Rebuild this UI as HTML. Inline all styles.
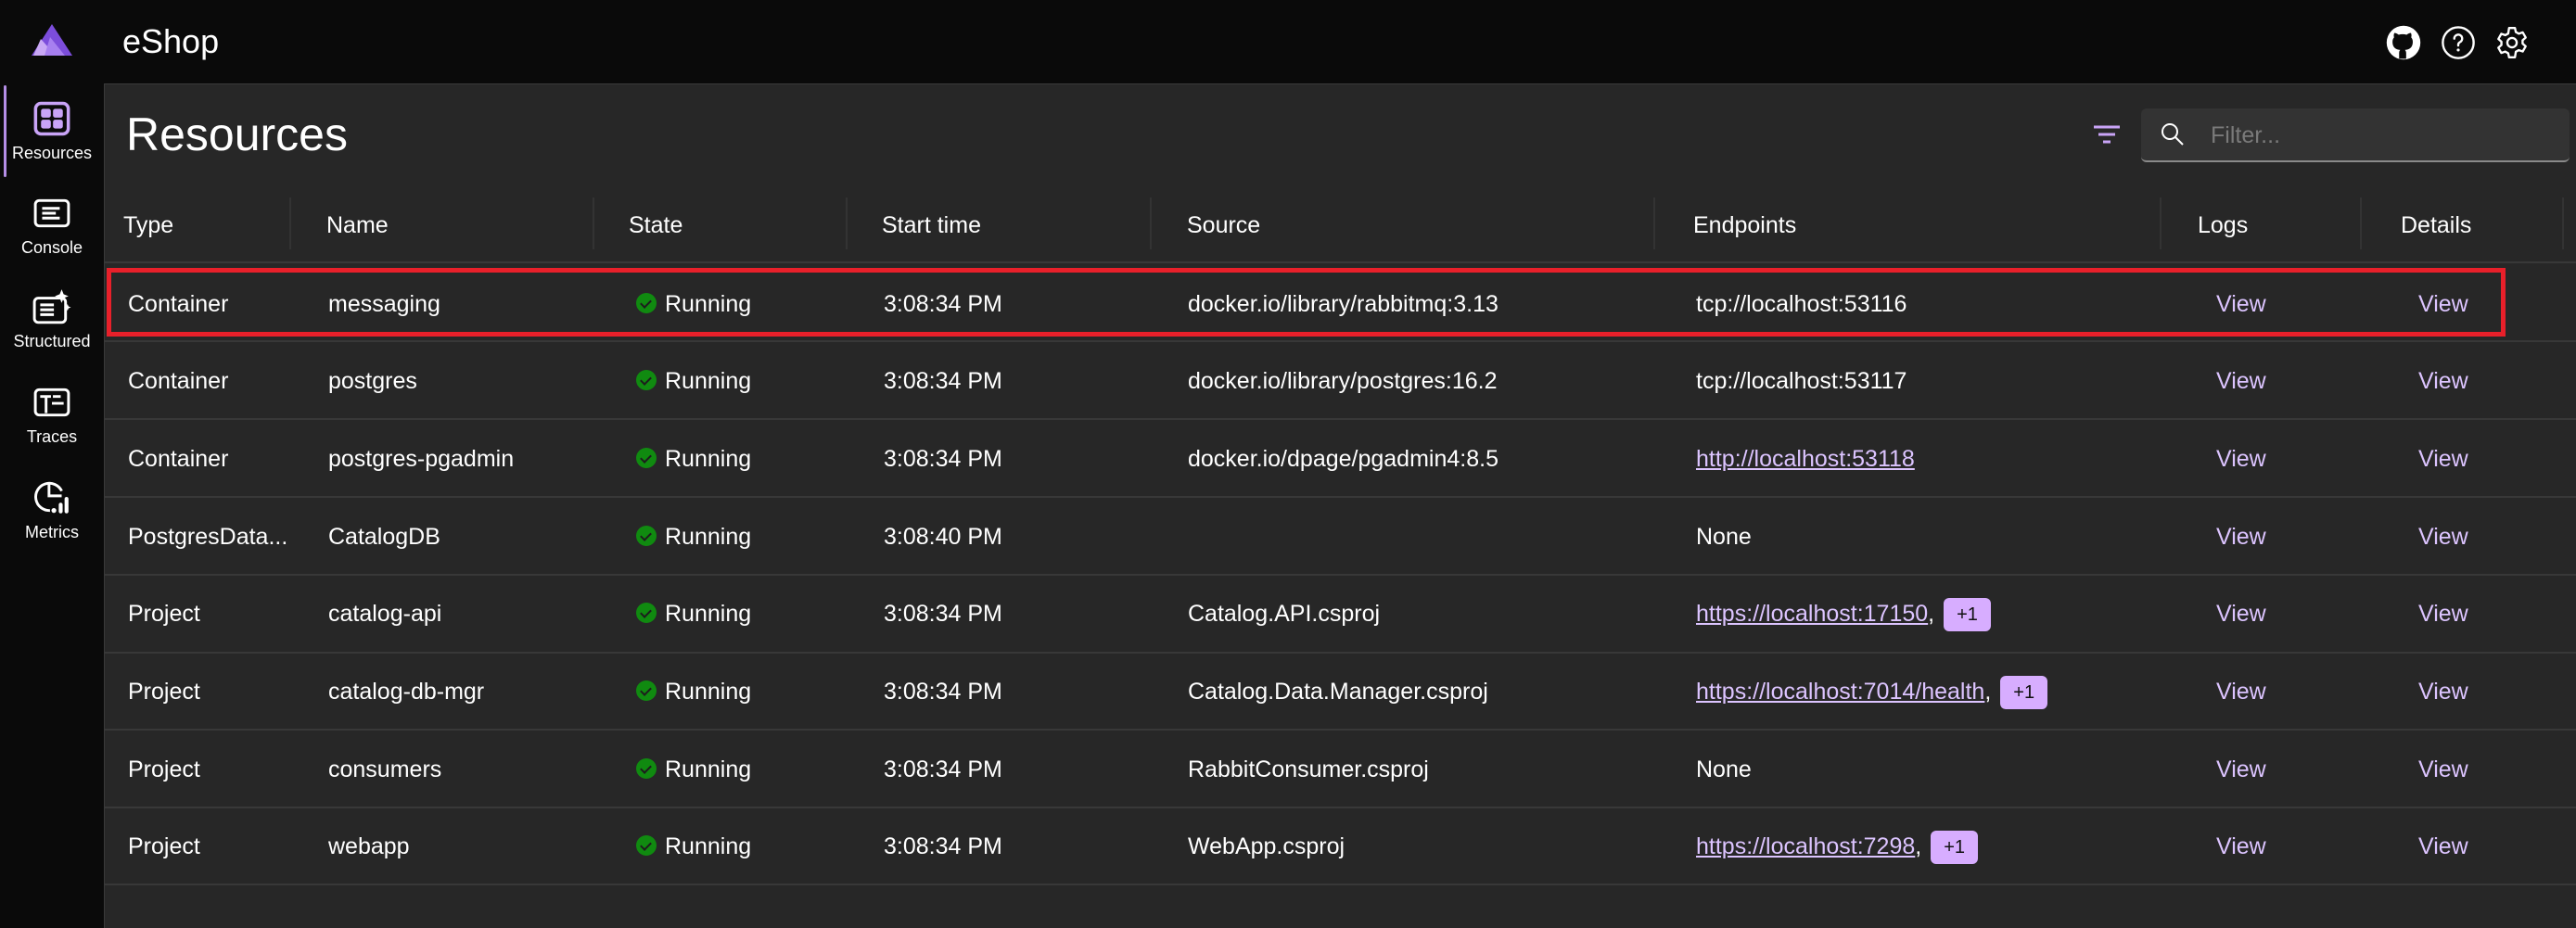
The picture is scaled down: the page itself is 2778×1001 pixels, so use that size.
<!DOCTYPE html>
<html><head><meta charset="utf-8"><style>
*{margin:0;padding:0;box-sizing:border-box}
body{width:2778px;height:1001px;background:#0a0a0a;font-family:"Liberation Sans",sans-serif;color:#fff;position:relative;overflow:hidden}
.a{position:absolute;white-space:nowrap}
#main{position:absolute;left:112px;top:90px;right:0;bottom:0;background:#272727;border-top:1px solid #3a3a3a;border-left:1px solid #3a3a3a}
.nav{position:absolute;left:0;width:112px;text-align:center;font-size:18px;line-height:22px;color:#fff}
.nav svg{display:block;margin:0 auto 6px}
.t{font-size:25px;color:#fff;line-height:30px}
.hl{position:absolute;left:113px;right:0;height:2px;background:#383838}
.sep{position:absolute;top:213px;width:2px;height:56px;background:#333}
.v{color:#dcc4ff}
.lnk{color:#dcc4ff;text-decoration:underline}
.b{display:inline-block;background:#d7adff;color:#111;font-size:20px;line-height:24px;border-radius:6px;padding:6px 14px;margin:-8px 0 -8px 10px;vertical-align:middle}
.ok{display:inline-block;width:22px;height:22px;border-radius:50%;background:#108a10;vertical-align:middle;margin-right:9px;position:relative;top:-2px}
.ok:after{content:"";position:absolute;left:7px;top:5px;width:5px;height:9px;border-right:2px solid #1d1d1d;border-bottom:2px solid #1d1d1d;transform:rotate(45deg)}
</style></head><body>
<div id="main"></div>
<!-- logo -->
<svg class="a" style="left:34px;top:26px" width="44" height="36" viewBox="0 0 44 36"><polygon points="22,0 44,34 0,34" fill="#7c4ddb"/><polygon points="10,16 26,34 2,34" fill="#c9a8f5"/><polygon points="20,14 36,34 14,34" fill="#a77ff0"/></svg>
<div class="a" style="left:132px;top:24px;font-size:36px">eShop</div>
<!-- top icons -->
<svg class="a" style="left:2573px;top:27px" width="38" height="38" viewBox="0 0 24 24"><circle cx="12" cy="12" r="11.5" fill="#fff"/><path d="M9 23v-4c0-1 .3-1.6.8-2-2.8-.3-5.3-1.4-5.3-5.6 0-1.2.4-2.2 1.1-3-.1-.3-.5-1.4.1-2.9 0 0 .9-.3 3 1.1a10 10 0 0 1 5.4 0c2.1-1.4 3-1.1 3-1.1.6 1.5.2 2.6.1 2.9.7.8 1.1 1.8 1.1 3 0 4.2-2.5 5.3-5.3 5.6.4.4.8 1.1.8 2.2V23z" fill="#0a0a0a"/></svg>
<svg class="a" style="left:2632px;top:27px" width="38" height="38" viewBox="0 0 24 24"><circle cx="12" cy="12" r="10.5" fill="none" stroke="#fff" stroke-width="1.5"/><path d="M9.3 9.3a2.7 2.7 0 1 1 3.8 2.4c-.7.4-1.1.9-1.1 1.7v.6" fill="none" stroke="#fff" stroke-width="1.5" stroke-linecap="round"/><circle cx="12" cy="17" r="1" fill="#fff"/></svg>
<svg class="a" style="left:2690px;top:27px" width="38" height="38" viewBox="0 0 24 24"><path d="M10 2h4l.6 2.8 2 1.1 2.7-.9 2 3.5-2.1 1.9v2.2l2.1 1.9-2 3.5-2.7-.9-2 1.1L14 22h-4l-.6-2.8-2-1.1-2.7.9-2-3.5 2.1-1.9v-2.2L2.7 9.5l2-3.5 2.7.9 2-1.1z" fill="none" stroke="#fff" stroke-width="1.5" stroke-linejoin="round"/><circle cx="12" cy="12" r="3.2" fill="none" stroke="#fff" stroke-width="1.5"/></svg>
<!-- sidebar -->
<div class="a" style="left:4px;top:92px;width:3px;height:99px;background:#b48ee6;border-radius:2px"></div>
<div class="nav" style="top:108px"><svg width="40" height="40" viewBox="0 0 34 34"><rect x="2" y="3" width="30" height="28" rx="5" fill="none" stroke="#c9a4f7" stroke-width="3"/><rect x="7" y="8" width="9" height="8" rx="2" fill="#c9a4f7"/><rect x="18" y="8" width="9" height="8" rx="2" fill="#c9a4f7"/><rect x="7" y="18" width="9" height="8" rx="2" fill="#c9a4f7"/><rect x="18" y="18" width="9" height="8" rx="2" fill="#c9a4f7"/></svg>Resources</div>
<div class="nav" style="top:210px"><svg width="40" height="40" viewBox="0 0 38 38"><rect x="2" y="6" width="34" height="26" rx="4" fill="none" stroke="#fff" stroke-width="2.8"/><path d="M9 14h18M9 19h14M9 24h18" stroke="#fff" stroke-width="2.8"/></svg>Console</div>
<div class="nav" style="top:311px"><svg width="42" height="40" viewBox="0 0 40 38"><rect x="2" y="10" width="32" height="25" rx="4" fill="none" stroke="#fff" stroke-width="2.8"/><path d="M8 17h14M8 22h14M8 27h14" stroke="#fff" stroke-width="2.8"/><path d="M30 1l2 5 5 2-5 2-2 5-2-5-5-2 5-2z" fill="#fff"/><path d="M36 16l1 2.5 2.5 1-2.5 1-1 2.5-1-2.5-2.5-1 2.5-1z" fill="#fff"/></svg>Structured</div>
<div class="nav" style="top:414px"><svg width="40" height="40" viewBox="0 0 38 38"><rect x="2" y="6" width="34" height="26" rx="4" fill="none" stroke="#fff" stroke-width="2.8"/><path d="M7 13h11M13 13v17M19 20h12M20 13h8" stroke="#fff" stroke-width="2.8"/></svg>Traces</div>
<div class="nav" style="top:517px"><svg width="42" height="40" viewBox="0 0 40 38"><path d="M18 32A14 14 0 1 1 30 12" fill="none" stroke="#fff" stroke-width="2.8"/><path d="M17 4v13h13" fill="none" stroke="#fff" stroke-width="2.8"/><circle cx="22" cy="32" r="2.5" fill="#fff"/><rect x="27" y="24" width="4" height="11" rx="2" fill="#fff"/><rect x="33" y="18" width="4" height="17" rx="2" fill="#fff"/></svg>Metrics</div>
<!-- title & filter -->
<div class="a" style="left:136px;top:116px;font-size:50px">Resources</div>
<svg class="a" style="left:2257px;top:134px" width="30" height="24" viewBox="0 0 30 24"><path d="M1 3h28M6 11h18M11 19h8" stroke="#c9a4f7" stroke-width="3"/></svg>
<div class="a" style="left:2309px;top:117px;width:462px;height:58px;background:#333;border-radius:6px;border-bottom:2px solid #8a8a8a"></div>
<svg class="a" style="left:2329px;top:131px" width="28" height="28" viewBox="0 0 28 28"><circle cx="11" cy="11" r="8" fill="none" stroke="#fff" stroke-width="2"/><path d="M17 17l8 8" stroke="#fff" stroke-width="2"/></svg>
<div class="a" style="left:2384px;top:132px;font-size:25px;color:#7a7a7a">Filter...</div>
<!-- header -->
<div class="sep" style="left:312px"></div><div class="sep" style="left:639px"></div><div class="sep" style="left:912px"></div><div class="sep" style="left:1240px"></div><div class="sep" style="left:1783px"></div><div class="sep" style="left:2329px"></div><div class="sep" style="left:2545px"></div><div class="sep" style="left:2763px"></div>
<div class="a t" style="left:133px;top:228px">Type</div>
<div class="a t" style="left:352px;top:228px">Name</div>
<div class="a t" style="left:678px;top:228px">State</div>
<div class="a t" style="left:951px;top:228px">Start time</div>
<div class="a t" style="left:1280px;top:228px">Source</div>
<div class="a t" style="left:1826px;top:228px">Endpoints</div>
<div class="a t" style="left:2370px;top:228px">Logs</div>
<div class="a t" style="left:2589px;top:228px">Details</div>
<div class="hl" style="top:282px"></div>
<div class="hl" style="top:367px"></div>
<div class="hl" style="top:451px"></div>
<div class="hl" style="top:535px"></div>
<div class="hl" style="top:619px"></div>
<div class="hl" style="top:703px"></div>
<div class="hl" style="top:786px"></div>
<div class="hl" style="top:870px"></div>
<div class="hl" style="top:953px"></div>
<div class="a" style="left:115px;top:289px;width:2587px;height:74px;border:5px solid #e8202a"></div>
<!-- rows -->
<div class="a t" style="left:138px;top:313px">Container</div><div class="a t" style="left:354px;top:313px">messaging</div><div class="a t" style="left:686px;top:313px"><span class="ok"></span>Running</div><div class="a t" style="left:953px;top:313px">3:08:34 PM</div><div class="a t" style="left:1281px;top:313px">docker.io/library/rabbitmq:3.13</div><div class="a t" style="left:1829px;top:313px">tcp://localhost:53116</div><div class="a t v" style="left:2390px;top:313px">View</div><div class="a t v" style="left:2608px;top:313px">View</div>
<div class="a t" style="left:138px;top:396px">Container</div><div class="a t" style="left:354px;top:396px">postgres</div><div class="a t" style="left:686px;top:396px"><span class="ok"></span>Running</div><div class="a t" style="left:953px;top:396px">3:08:34 PM</div><div class="a t" style="left:1281px;top:396px">docker.io/library/postgres:16.2</div><div class="a t" style="left:1829px;top:396px">tcp://localhost:53117</div><div class="a t v" style="left:2390px;top:396px">View</div><div class="a t v" style="left:2608px;top:396px">View</div>
<div class="a t" style="left:138px;top:480px">Container</div><div class="a t" style="left:354px;top:480px">postgres-pgadmin</div><div class="a t" style="left:686px;top:480px"><span class="ok"></span>Running</div><div class="a t" style="left:953px;top:480px">3:08:34 PM</div><div class="a t" style="left:1281px;top:480px">docker.io/dpage/pgadmin4:8.5</div><div class="a t lnk" style="left:1829px;top:480px">http://localhost:53118</div><div class="a t v" style="left:2390px;top:480px">View</div><div class="a t v" style="left:2608px;top:480px">View</div>
<div class="a t" style="left:138px;top:564px">PostgresData...</div><div class="a t" style="left:354px;top:564px">CatalogDB</div><div class="a t" style="left:686px;top:564px"><span class="ok"></span>Running</div><div class="a t" style="left:953px;top:564px">3:08:40 PM</div><div class="a t" style="left:1829px;top:564px">None</div><div class="a t v" style="left:2390px;top:564px">View</div><div class="a t v" style="left:2608px;top:564px">View</div>
<div class="a t" style="left:138px;top:647px">Project</div><div class="a t" style="left:354px;top:647px">catalog-api</div><div class="a t" style="left:686px;top:647px"><span class="ok"></span>Running</div><div class="a t" style="left:953px;top:647px">3:08:34 PM</div><div class="a t" style="left:1281px;top:647px">Catalog.API.csproj</div><div class="a t" style="left:1829px;top:647px"><span class="lnk">https://localhost:17150</span>,<span class="b">+1</span></div><div class="a t v" style="left:2390px;top:647px">View</div><div class="a t v" style="left:2608px;top:647px">View</div>
<div class="a t" style="left:138px;top:731px">Project</div><div class="a t" style="left:354px;top:731px">catalog-db-mgr</div><div class="a t" style="left:686px;top:731px"><span class="ok"></span>Running</div><div class="a t" style="left:953px;top:731px">3:08:34 PM</div><div class="a t" style="left:1281px;top:731px">Catalog.Data.Manager.csproj</div><div class="a t" style="left:1829px;top:731px"><span class="lnk">https://localhost:7014/health</span>,<span class="b">+1</span></div><div class="a t v" style="left:2390px;top:731px">View</div><div class="a t v" style="left:2608px;top:731px">View</div>
<div class="a t" style="left:138px;top:815px">Project</div><div class="a t" style="left:354px;top:815px">consumers</div><div class="a t" style="left:686px;top:815px"><span class="ok"></span>Running</div><div class="a t" style="left:953px;top:815px">3:08:34 PM</div><div class="a t" style="left:1281px;top:815px">RabbitConsumer.csproj</div><div class="a t" style="left:1829px;top:815px">None</div><div class="a t v" style="left:2390px;top:815px">View</div><div class="a t v" style="left:2608px;top:815px">View</div>
<div class="a t" style="left:138px;top:898px">Project</div><div class="a t" style="left:354px;top:898px">webapp</div><div class="a t" style="left:686px;top:898px"><span class="ok"></span>Running</div><div class="a t" style="left:953px;top:898px">3:08:34 PM</div><div class="a t" style="left:1281px;top:898px">WebApp.csproj</div><div class="a t" style="left:1829px;top:898px"><span class="lnk">https://localhost:7298</span>,<span class="b">+1</span></div><div class="a t v" style="left:2390px;top:898px">View</div><div class="a t v" style="left:2608px;top:898px">View</div>
</body></html>
